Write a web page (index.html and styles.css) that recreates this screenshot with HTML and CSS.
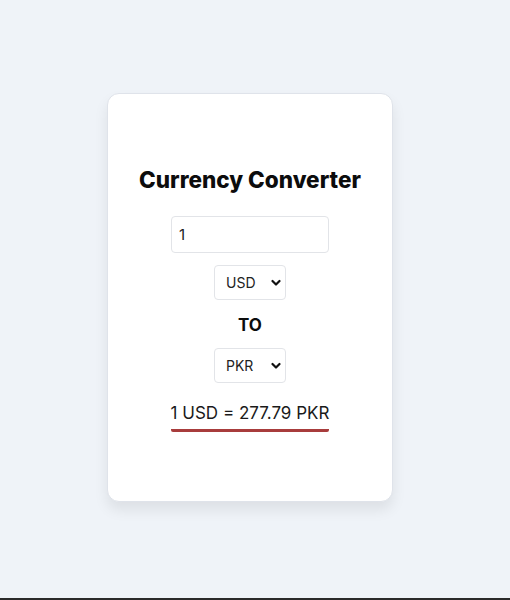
FILE: index.html
```html
<!DOCTYPE html>
<html>
<head>
<meta charset="utf-8">
<link rel="stylesheet" href="styles.css">
</head>
<body>
<div class="page">
  <div class="card">
    <h1 class="title">Currency Converter</h1>
    <input class="amount" type="text" value="1">
    <div class="select">
      <span class="select-text">USD</span>
      <svg class="chev" width="10" height="8" viewBox="0 0 10 8"><path d="M1.5 2 L5 5.5 L8.5 2" fill="none" stroke="#111" stroke-width="2.2" stroke-linecap="round" stroke-linejoin="round"/></svg>
    </div>
    <div class="to">TO</div>
    <div class="select">
      <span class="select-text">PKR</span>
      <svg class="chev" width="10" height="8" viewBox="0 0 10 8"><path d="M1.5 2 L5 5.5 L8.5 2" fill="none" stroke="#111" stroke-width="2.2" stroke-linecap="round" stroke-linejoin="round"/></svg>
    </div>
    <div class="result">1 USD = 277.79 PKR</div>
  </div>
</div>
<div class="bottom-bar"></div>
</body>
</html>
```
FILE: styles.css
```css
html, body {
  margin: 0;
  padding: 0;
}
body {
  background: #eff3f8;
  width: 510px;
  height: 600px;
  overflow: hidden;
  font-family: Inter, "Noto Sans", sans-serif;
  display: flex;
  flex-direction: column;
}
.page {
  flex: 1;
  padding: 93px 0 0 107px;
}
.card {
  width: 284px;
  height: 407px;
  background: #fff;
  border: 1px solid #dfe3ea;
  border-radius: 12px;
  box-shadow: 0 8px 14px rgba(0, 0, 0, 0.08);
  display: flex;
  flex-direction: column;
  align-items: center;
}
.title {
  margin: 71px 0 0 0;
  font-size: 22.5px;
  font-weight: 800;
  color: #0c0c0c;
  line-height: 30px;
  letter-spacing: 0;
}
.amount {
  margin-top: 21px;
  width: 158px;
  height: 37px;
  box-sizing: border-box;
  border: 1px solid #e2e4e8;
  border-radius: 4px;
  padding: 0 7px;
  font-family: Inter, sans-serif;
  font-size: 15px;
  color: #222;
  outline: none;
}
.select {
  margin-top: 12px;
  width: 72px;
  height: 35px;
  box-sizing: border-box;
  border: 1px solid #e2e4e8;
  border-radius: 4px;
  display: flex;
  align-items: center;
  justify-content: space-between;
  padding: 0 4px 0 11px;
  font-size: 14px;
  color: #222;
}
.chev {
  display: block;
}
.to {
  margin-top: 14px;
  font-size: 17px;
  font-weight: 700;
  color: #0c0c0c;
  line-height: 22px;
}
.to + .select {
  margin-top: 12px;
}
.result {
  margin-top: 18px;
  font-size: 17px;
  font-weight: 400;
  color: #1a1a1a;
  line-height: 24px;
  padding-bottom: 4px;
  border-bottom: 3px solid #a83c3c;
  border-radius: 2px;
}
.bottom-bar {
  height: 2px;
  background: #2a2a2a;
}
```
